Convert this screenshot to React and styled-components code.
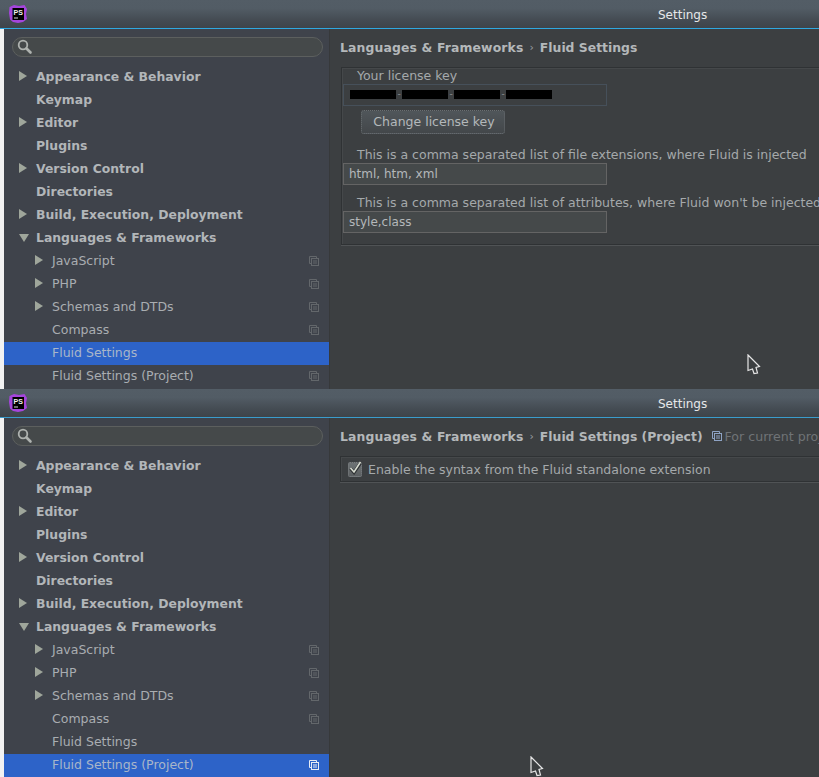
import React from 'react';
import styled, { createGlobalStyle } from 'styled-components';

const GlobalStyle = createGlobalStyle`
* {
  box-sizing: border-box;
}
html, body {
  margin: 0;
  padding: 0;
  height: 100%;
  overflow: hidden;
  background: #3c3f41;
}
body {
  font-family: "DejaVu Sans", sans-serif;
  font-size: 12.5px;
  color: #b4b8ba;
}
`;

const Page = styled.div`
  position: relative;
  width: 819px;
  height: 777px;
  overflow: hidden;
  display: flex;
  flex-direction: column;
`;

const Window = styled.div`
  height: ${p => p.$height}px;
  flex: none;
  display: flex;
  flex-direction: column;
  overflow: hidden;
`;

const TitleBar = styled.div`
  height: 29px;
  flex: none;
  display: flex;
  align-items: center;
  background: linear-gradient(#535d66, #525c65 30%, #434a51 75%, #3e444a);
  border-bottom: 1px solid ${p => p.$accent};
  padding-left: 9px;
`;

const Title = styled.div`
  margin-left: 631px;
  padding-top: 2px;
  font-size: 12px;
  color: #e6e8ea;
`;

const Body = styled.div`
  flex: 1;
  min-height: 0;
  display: flex;
  background: #3c3f41;
  border-left: 4px solid #f2f2f2;
`;

const Sidebar = styled.div`
  width: 326px;
  flex: none;
  background: #3f434b;
  border-right: 1px solid #37393b;
  padding-top: 8px;
  overflow: hidden;
`;

const SearchBox = styled.div`
  height: 20px;
  margin: 0 6px 9px 8px;
  border: 1px solid #5c5f5e;
  border-radius: 10px;
  background: #45494a;
  display: flex;
  align-items: center;
  padding-left: 4px;
`;

const Row = styled.div`
  height: 23px;
  flex: none;
  display: flex;
  align-items: center;
  position: relative;
  padding: 0 10px 2px ${p => (p.$child ? 48 : 32)}px;
  font-size: ${p => (p.$child ? 12.5 : 12.4)}px;
  font-weight: ${p => (p.$child ? 400 : 700)};
  background: ${p => (p.$active ? '#2d63c8' : 'transparent')};
  color: ${p => (p.$active ? '#a9b6c9' : p.$child ? '#a9adb1' : '#b2b6b9')};
`;

const Arrow = styled.span`
  position: absolute;
  left: ${p => (p.$child ? 31 : 15)}px;
  top: ${p => (p.$open ? 7 : 5)}px;
  width: 0;
  height: 0;
  ${p =>
    p.$open
      ? `border-left: 5px solid transparent;
         border-right: 5px solid transparent;
         border-top: 8px solid #9fa69b;`
      : `border-top: 5px solid transparent;
         border-bottom: 5px solid transparent;
         border-left: 8px solid #9fa69b;`}
`;

const RowLabel = styled.span`
  flex: 1;
  white-space: nowrap;
`;

const Content = styled.div`
  flex: 1;
  min-width: 0;
  overflow: hidden;
  padding: 8px 0 0 10px;
`;

const Crumbs = styled.div`
  height: 20px;
  display: flex;
  align-items: center;
  white-space: nowrap;
  font-size: 12.4px;
  font-weight: 700;
  color: #b4b8ba;
`;

const CrumbParent = styled.span`
  letter-spacing: 0.14px;
`;

const CrumbSep = styled.span`
  margin: 0 6px;
  font-weight: 400;
  font-size: 11px;
  color: #9a9ea1;
`;

const ScopeNote = styled.span`
  display: flex;
  align-items: center;
  gap: 3px;
  margin-left: 9px;
  font-size: 12.6px;
  font-weight: 400;
  color: #6f7376;
`;

const GroupBox = styled.div`
  margin: ${p => p.$top}px -40px 0 ${p => p.$left}px;
  height: ${p => p.$height}px;
  border: 1px solid #2f3234;
  box-shadow: inset 1px 1px 0 #45484a, 0 1px 0 #505355;
`;

const FieldLabel = styled.div`
  height: ${p => p.$height}px;
  margin-left: 15px;
  padding-bottom: 1px;
  display: flex;
  align-items: flex-end;
  white-space: nowrap;
  color: #a5a9ab;
`;

const Field = styled.div`
  width: 264px;
  height: 22px;
  margin-left: 1px;
  display: flex;
  align-items: center;
  padding: 0 0 1px ${p => (p.$locked ? 6 : 5)}px;
  border: 1px solid ${p => (p.$locked ? '#46505a' : '#646464')};
  background: ${p => (p.$locked ? '#3c3f41' : '#45494a')};
  color: #b4b8ba;
  font-size: 12px;
`;

const KeyBlock = styled.span`
  width: 46px;
  height: 9px;
  background: #000;
`;

const KeyDash = styled.span`
  width: 6px;
  text-align: center;
  font-size: 9px;
  line-height: 9px;
  color: #8d9194;
`;

const Button = styled.div`
  width: 144px;
  height: 24px;
  margin: 4px 0 0 19px;
  padding: 0 0 1px 2px;
  display: flex;
  align-items: center;
  justify-content: center;
  border: 1px dotted #6a6f72;
  border-radius: 3px;
  background: linear-gradient(#50565a, #43474a);
  color: #b4b8ba;
`;

const CheckRow = styled.div`
  height: 24px;
  display: flex;
  align-items: center;
  padding-left: 7px;
  gap: 6px;
  font-size: 12.5px;
  color: #a5a9ab;
`;

const CheckBox = styled.div`
  width: 14px;
  height: 15px;
  margin-top: 1px;
  position: relative;
  border-radius: 2px;
  border: 1px dotted #7a7e80;
  background: linear-gradient(#6e7375, #5c6062);
`;

const CheckMark = styled.svg`
  position: absolute;
  left: -1px;
  top: -3px;
`;

const Pointer = styled.svg`
  position: absolute;
  left: ${p => p.$x}px;
  top: ${p => p.$y}px;
`;

const PsLogo = () => (
  <svg width="18" height="18" viewBox="0 0 18 18">
    <path d="M0.5 2 L5 0 L10 1 L15.5 0 L18 4 L17 9 L18 14 L14 17 L9 18 L4 17 L1 14.5 L0 8 Z" fill="#a545dc" />
    <rect x="3.5" y="3" width="11.5" height="12" fill="#000" />
    <text x="4.5" y="9.5" fontSize="7" fontWeight="700" fill="#f0f0f0" fontFamily="Liberation Sans, sans-serif">PS</text>
    <rect x="5" y="12.5" width="4" height="1" fill="#d8d8d8" />
  </svg>
);

const SearchIcon = () => (
  <svg width="18" height="16" viewBox="0 0 18 16" fill="none" stroke="#aeb2af">
    <circle cx="6" cy="6" r="4.3" strokeWidth="1.8" />
    <path d="M9.5 9.5 L13.5 13.5" strokeWidth="2.6" strokeLinecap="round" />
  </svg>
);

const CopyIcon = ({ color = '#63676b' }) => (
  <svg width="10" height="10" viewBox="0 0 10 10" fill="none" stroke={color} strokeWidth="1">
    <path d="M2.5 7.5 H0.5 V0.5 H7.5 V2.5" />
    <rect x="2.5" y="2.5" width="7" height="7" />
    <path d="M4 5 H8 M4 7 H8" />
  </svg>
);

const tree = [
  { label: 'Appearance & Behavior', arrow: true },
  { label: 'Keymap' },
  { label: 'Editor', arrow: true },
  { label: 'Plugins' },
  { label: 'Version Control', arrow: true },
  { label: 'Directories' },
  { label: 'Build, Execution, Deployment', arrow: true },
  { label: 'Languages & Frameworks', arrow: true, open: true },
  { label: 'JavaScript', child: true, arrow: true, copy: true },
  { label: 'PHP', child: true, arrow: true, copy: true },
  { label: 'Schemas and DTDs', child: true, arrow: true, copy: true },
  { label: 'Compass', child: true, copy: true },
  { label: 'Fluid Settings', child: true, id: 'app' },
  { label: 'Fluid Settings (Project)', child: true, copy: true, id: 'project' },
];

function SettingsTree({ active }) {
  return (
    <Sidebar>
      <SearchBox><SearchIcon /></SearchBox>
      {tree.map(item => {
        const isActive = item.id === active;
        return (
          <Row key={item.label} $child={item.child} $active={isActive}>
            {item.arrow && <Arrow $child={item.child} $open={item.open} />}
            <RowLabel>{item.label}</RowLabel>
            {item.copy && <CopyIcon color={isActive ? '#e8ecf4' : '#63676b'} />}
          </Row>
        );
      })}
    </Sidebar>
  );
}

function SettingsWindow({ height, accent, active, children }) {
  return (
    <Window $height={height}>
      <TitleBar $accent={accent}>
        <PsLogo />
        <Title>Settings</Title>
      </TitleBar>
      <Body>
        <SettingsTree active={active} />
        <Content>{children}</Content>
      </Body>
    </Window>
  );
}

export default function App() {
  return (
    <Page>
      <GlobalStyle />
      <SettingsWindow height={389} accent="#2fa8e0" active="app">
        <Crumbs><CrumbParent>Languages &amp; Frameworks</CrumbParent><CrumbSep>›</CrumbSep>Fluid Settings</Crumbs>
        <GroupBox $top={10} $left={1} $height={178}>
          <FieldLabel $height={16}>Your license key</FieldLabel>
          <Field $locked>
            <KeyBlock /><KeyDash>-</KeyDash>
            <KeyBlock /><KeyDash>-</KeyDash>
            <KeyBlock /><KeyDash>-</KeyDash>
            <KeyBlock />
          </Field>
          <Button>Change license key</Button>
          <FieldLabel $height={29}>This is a comma separated list of file extensions, where Fluid is injected</FieldLabel>
          <Field>html, htm, xml</Field>
          <FieldLabel $height={26}>This is a comma separated list of attributes, where Fluid won't be injected</FieldLabel>
          <Field>style,class</Field>
        </GroupBox>
      </SettingsWindow>
      <SettingsWindow height={388} accent="#3a9ccc" active="project">
        <Crumbs>
          <CrumbParent>Languages &amp; Frameworks</CrumbParent><CrumbSep>›</CrumbSep>Fluid Settings (Project)
          <ScopeNote><CopyIcon color="#8ea3c4" />For current project</ScopeNote>
        </Crumbs>
        <GroupBox $top={10} $left={0} $height={26}>
          <CheckRow>
            <CheckBox>
              <CheckMark width="15" height="15" viewBox="0 0 15 15" fill="none">
                <path d="M2.5 8.5 L6 12.5 L12.5 3" stroke="#2f3234" strokeWidth="3.2" />
                <path d="M2.5 8 L6 12 L12.5 2" stroke="#d9ddd2" strokeWidth="1.6" />
              </CheckMark>
            </CheckBox>
            Enable the syntax from the Fluid standalone extension
          </CheckRow>
        </GroupBox>
      </SettingsWindow>
      <Pointer $x={747} $y={354} width="14" height="21" viewBox="0 0 14 21" fill="#3c3f41" stroke="#e6e6e6" strokeWidth="1.2">
        <path d="M1 1 L12.5 12.5 L9 13.5 L10.5 19 L7 19.5 L5.5 15 L1 16.5 Z" />
      </Pointer>
      <Pointer $x={530} $y={756} width="14" height="21" viewBox="0 0 14 21" fill="#3c3f41" stroke="#e6e6e6" strokeWidth="1.2">
        <path d="M1 1 L12.5 12.5 L9 13.5 L10.5 19 L7 19.5 L5.5 15 L1 16.5 Z" />
      </Pointer>
    </Page>
  );
}
